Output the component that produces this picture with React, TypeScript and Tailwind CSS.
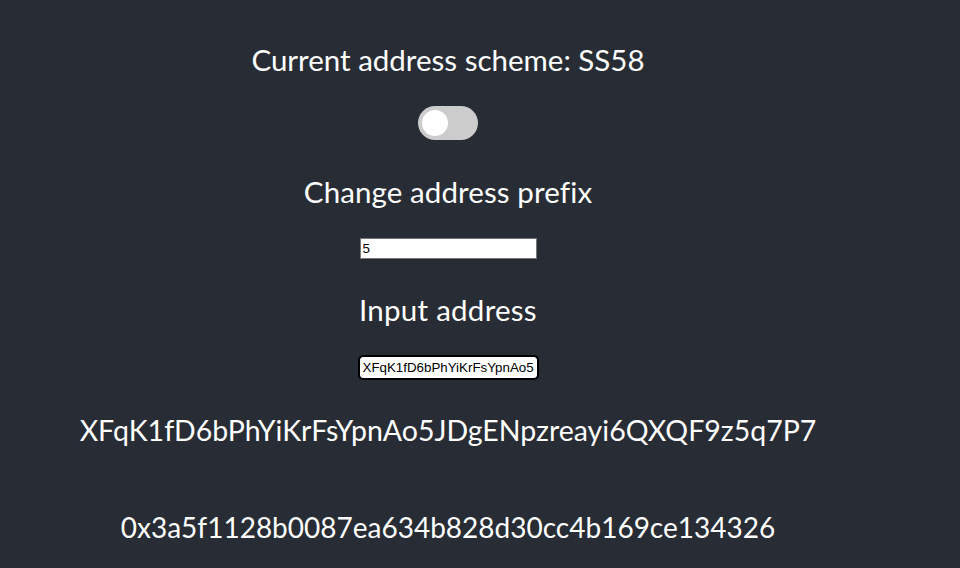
import { useState } from 'react'

const ADDRESS = 'XFqK1fD6bPhYiKrFsYpnAo5JDgENpzreayi6QXQF9z5q7P7'
const PUBKEY = '0x3a5f1128b0087ea634b828d30cc4b169ce134326'

export default function App() {
  const [ethereum, setEthereum] = useState(false)
  const [prefix, setPrefix] = useState('5')
  const [input, setInput] = useState(ADDRESS)

  return (
    <div className="min-h-screen w-full bg-[#282c34] text-white font-['Lato','Segoe_UI',sans-serif]">
      <div className="w-[896px] flex flex-col items-center text-center text-[28px] leading-[36px]">
        {/* esquema actual */}
        <p className="mt-[42px] text-[29.5px]">
          Current address scheme: {ethereum ? 'H160' : 'SS58'}
        </p>

        <label className="mt-[28px] relative inline-block w-[60px] h-[34px] cursor-pointer">
          <input
            type="checkbox"
            checked={ethereum}
            onChange={(e) => setEthereum(e.target.checked)}
            className="opacity-0 w-0 h-0"
          />
          <span
            className={`absolute inset-0 rounded-full transition-colors ${
              ethereum ? 'bg-[#2196f3]' : 'bg-[#cccccc]'
            }`}
          />
          <span
            className={`absolute left-[4px] top-[4px] w-[26px] h-[26px] rounded-full bg-white transition-transform ${
              ethereum ? 'translate-x-[26px]' : 'translate-x-0'
            }`}
          />
        </label>

        <p className="mt-[34px] text-[29.5px] tracking-[0.1px]">Change address prefix</p>
        <input
          type="text"
          value={prefix}
          onChange={(e) => setPrefix(e.target.value)}
          className="mt-[28px] w-[177px] h-[21px] bg-white text-black border border-[#767676] px-[2px] text-[13.33px] font-['Liberation_Sans',Arial,sans-serif] outline-none"
        />

        <p className="mt-[33px] text-[29.5px] tracking-[0.25px]">Input address</p>
        <input
          type="text"
          value={input}
          onChange={(e) => setInput(e.target.value)}
          className="mt-[29px] w-[177px] h-[21px] bg-white text-black border border-white rounded-[3px] ring-2 ring-black px-[2px] text-[13.33px] font-['Liberation_Sans',Arial,sans-serif] outline-none"
        />

        <p className="mt-[32px] leading-[40px] text-[28.5px]">{input}</p>
        <p className="mt-[57px] leading-[40px]">{PUBKEY}</p>
      </div>
    </div>
  )
}
